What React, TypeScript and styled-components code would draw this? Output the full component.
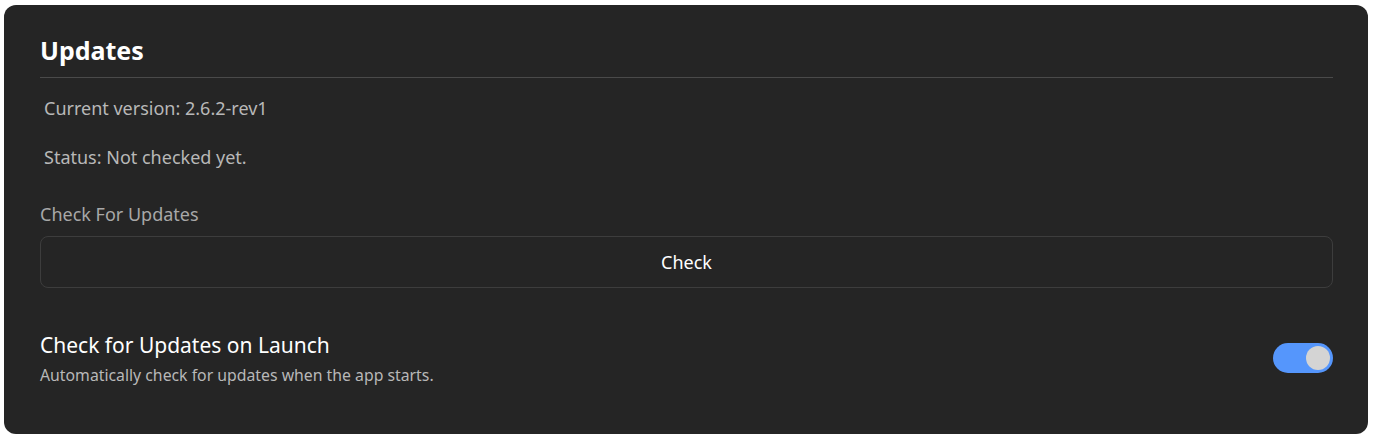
import styled, { createGlobalStyle } from 'styled-components';

const GlobalStyle = createGlobalStyle`
  body {
    margin: 0;
    background: #ffffff;
    font-family: 'Noto Sans', 'DejaVu Sans', sans-serif;
  }
`;

const Page = styled.div`
  padding: 5px 10px 6px 4px;
`;

const Card = styled.section`
  background: #252525;
  border-radius: 12px;
  padding: 26px 35px 49px 36px;
  display: flex;
  flex-direction: column;
`;

const Title = styled.h2`
  margin: 0;
  padding-bottom: 8px;
  font-size: 25px;
  font-weight: 700;
  color: #ffffff;
  border-bottom: 1px solid #4a4a4a;
  line-height: 38px;
`;

const InfoText = styled.p<{ $gap: number }>`
  margin: 0;
  padding-left: 4px;
  font-size: 18px;
  color: #b8b8b8;
  line-height: 24px;
  margin-top: ${(p) => p.$gap}px;
`;

const FieldLabel = styled.div`
  margin-top: 33px;
  font-size: 18px;
  color: #a8a8a8;
  line-height: 24px;
`;

const CheckButton = styled.button`
  margin-top: 10px;
  height: 52px;
  width: 100%;
  background: transparent;
  border: 1px solid #3d3d3d;
  border-radius: 8px;
  color: #ffffff;
  font-family: inherit;
  font-size: 18px;
`;

const SettingRow = styled.div`
  margin-top: 43px;
  display: flex;
  align-items: center;
  justify-content: space-between;
`;

const SettingText = styled.div`
  display: flex;
  flex-direction: column;
  gap: 6px;
`;

const SettingTitle = styled.div`
  font-size: 21px;
  color: #ffffff;
  line-height: 28px;
`;

const SettingDesc = styled.div`
  font-size: 15.8px;
  color: #b8b8b8;
  line-height: 20px;
`;

const Toggle = styled.div<{ $on: boolean }>`
  width: 60px;
  height: 30px;
  border-radius: 15px;
  background: ${(p) => (p.$on ? '#5596fc' : '#555555')};
  display: flex;
  align-items: center;
  justify-content: ${(p) => (p.$on ? 'flex-end' : 'flex-start')};
  padding: 0 3px;
  box-sizing: border-box;
`;

const Knob = styled.div`
  width: 24px;
  height: 24px;
  border-radius: 50%;
  background: #d4d4d4;
`;

export default function App() {
  return (
    <Page>
      <GlobalStyle />
      <Card>
        <Title>Updates</Title>
        <InfoText $gap={18}>Current version: 2.6.2-rev1</InfoText>
        <InfoText $gap={25}>Status: Not checked yet.</InfoText>
        <FieldLabel>Check For Updates</FieldLabel>
        <CheckButton>Check</CheckButton>
        <SettingRow>
          <SettingText>
            <SettingTitle>Check for Updates on Launch</SettingTitle>
            <SettingDesc>Automatically check for updates when the app starts.</SettingDesc>
          </SettingText>
          <Toggle $on={true}>
            <Knob />
          </Toggle>
        </SettingRow>
      </Card>
    </Page>
  );
}
